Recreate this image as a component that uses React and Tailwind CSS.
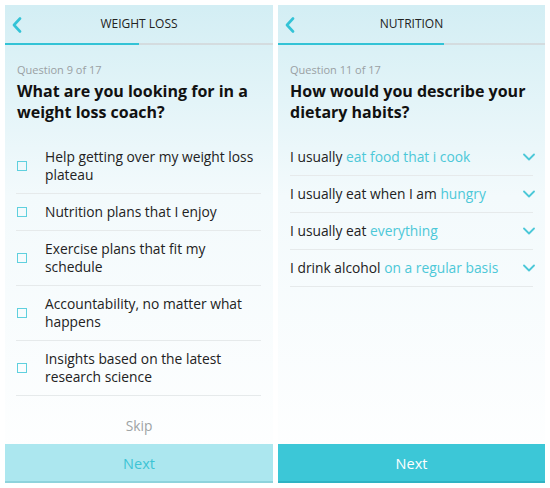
const FONT = { fontFamily: '"Open Sans", "Liberation Sans", sans-serif' }

const GOALS = [
  'Help getting over my weight loss plateau',
  'Nutrition plans that I enjoy',
  'Exercise plans that fit my schedule',
  'Accountability, no matter what happens',
  'Insights based on the latest research science',
]

const HABITS = [
  ['I usually', 'eat food that i cook'],
  ['I usually eat when I am', 'hungry'],
  ['I usually eat', 'everything'],
  ['I drink alcohol', 'on a regular basis'],
]

function Header({ title, progress }) {
  return (
    <div>
      <div className="relative h-[38px] flex items-center justify-center">
        <svg className="absolute left-[7px] top-[12px]" width="10" height="16" viewBox="0 0 10 16" fill="none">
          <path d="M8 1.5 L2 8 L8 14.5" stroke="#33c3d6" strokeWidth="2.6" strokeLinecap="round" strokeLinejoin="round" />
        </svg>
        <span className="text-[12px] text-[#222]">{title}</span>
      </div>
      <div className="h-[2px] bg-[#d4dcdf] flex">
        <div className="h-full bg-[#33c3d6]" style={{ width: progress }} />
      </div>
    </div>
  )
}

function Question({ label, text }) {
  return (
    <div className="px-[12px] pt-[18px]">
      <p className="text-[11px] text-[#9aa0a3] leading-[14px]">{label}</p>
      <h1 className="mt-[4px] text-[16px] font-bold leading-[21px] text-[#111]">{text}</h1>
    </div>
  )
}

function Caret() {
  return (
    <svg width="12" height="8" viewBox="0 0 12 8" fill="none" className="mr-[-2px]">
      <path d="M1 1.5 L6 6.5 L11 1.5" stroke="#4cc8d8" strokeWidth="1.8" strokeLinecap="round" strokeLinejoin="round" />
    </svg>
  )
}

export default function App() {
  return (
    <div className="h-[488px] w-[550px] bg-white flex gap-[5px] px-[5px] pt-[5px]" style={FONT}>
      {/* left screen: multi-select */}
      <div className="w-[268px] h-[478px] flex flex-col bg-gradient-to-b from-[#d3eef4] via-[#f3fafc] via-40% to-white">
        <Header title="WEIGHT LOSS" progress="50%" />
        <Question label="Question 9 of 17" text="What are you looking for in a weight loss coach?" />
        <div className="mt-[16px] ml-[11px] mr-[12px]">
          {GOALS.map((g) => (
            <div key={g} className="flex items-center border-b border-[#e6eaeb] py-[9px]">
              <span className="w-[10px] h-[10px] border-[1.5px] border-[#5fd0de] ml-[1px] shrink-0" />
              <span className="ml-[18px] text-[13.8px] leading-[18px] text-[#222] pr-[4px]">{g}</span>
            </div>
          ))}
        </div>
        <div className="flex-1 flex items-end justify-center pb-[9px] text-[13.8px] leading-[18px] text-[#9ea3a5]">Skip</div>
        <button className="h-[39px] pt-[3px] bg-[#ace7ef] border-b-[2px] border-[#8ed3dc] text-[14.5px] text-[#3cc4d5]">Next</button>
      </div>

      {/* right screen: dropdown answers */}
      <div className="w-[267px] h-[478px] flex flex-col bg-gradient-to-b from-[#d3eef4] via-[#f3fafc] via-40% to-white">
        <Header title="NUTRITION" progress="62%" />
        <Question label="Question 11 of 17" text="How would you describe your dietary habits?" />
        <div className="mt-[16px] mx-[12px]">
          {HABITS.map(([a, b]) => (
            <div key={b} className="flex items-center justify-between h-[37px] border-b border-[#e6eaeb]">
              <span className="text-[13.8px] text-[#222]">
                {a} <span className="text-[#4cc8d8]">{b}</span>
              </span>
              <Caret />
            </div>
          ))}
        </div>
        <div className="flex-1" />
        <button className="h-[39px] pt-[3px] bg-[#3cc7d7] border-b-[2px] border-[#2fb3c3] text-[14.5px] text-white">Next</button>
      </div>
    </div>
  )
}
